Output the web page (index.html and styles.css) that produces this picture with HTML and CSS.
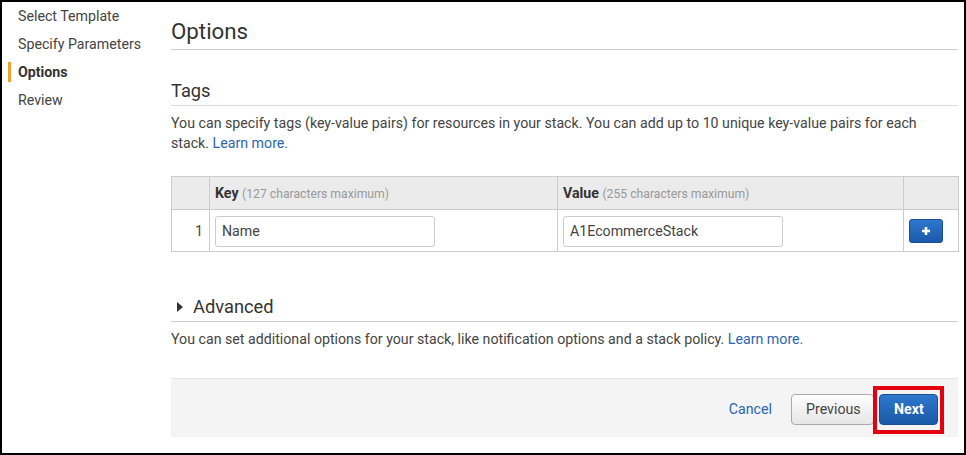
FILE: index.html
```html
<!DOCTYPE html>
<html>
<head>
<meta charset="utf-8">
<link rel="stylesheet" href="styles.css">
</head>
<body>
<div class="frame">
  <nav class="sidebar">
    <div class="step">Select Template</div>
    <div class="step">Specify Parameters</div>
    <div class="step active">Options</div>
    <div class="step">Review</div>
  </nav>
  <main class="main">
    <h1 class="title">Options</h1>
    <h2 class="section">Tags</h2>
    <p class="desc">You can specify tags (key-value pairs) for resources in your stack. You can add up to 10 unique key-value pairs for each stack. <a class="link" href="#">Learn more.</a></p>
    <table class="tags">
      <thead>
        <tr>
          <th class="num"></th>
          <th class="col-key"><b>Key</b> <span class="hint">(127 characters maximum)</span></th>
          <th class="col-val"><b>Value</b> <span class="hint">(255 characters maximum)</span></th>
          <th class="act"></th>
        </tr>
      </thead>
      <tbody>
        <tr>
          <td class="num">1</td>
          <td class="col-key"><input class="field" type="text" value="Name"></td>
          <td class="col-val"><input class="field" type="text" value="A1EcommerceStack"></td>
          <td class="act"><button class="plus" type="button"><svg width="10" height="10" viewBox="0 0 10 10"><path d="M5 1v8M1 5h8" stroke="#fff" stroke-width="2.6"/></svg></button></td>
        </tr>
      </tbody>
    </table>
    <h2 class="section adv"><span class="tri"></span>Advanced</h2>
    <p class="desc desc2">You can set additional options for your stack, like notification options and a stack policy. <a class="link" href="#">Learn more.</a></p>
    <div class="footer">
      <a class="cancel" href="#">Cancel</a>
      <button class="btn prev" type="button">Previous</button>
      <span class="next-wrap"><button class="btn next" type="button">Next</button></span>
    </div>
  </main>
</div>
</body>
</html>
```

FILE: styles.css
```css
html, body {
  margin: 0;
  padding: 0;
  background: #fff;
}
body {
  font-family: Roboto, "Liberation Sans", Arial, sans-serif;
  color: #444;
  font-size: 14.2px;
}
.frame {
  width: 966px;
  height: 455px;
  box-sizing: border-box;
  border: 2px solid #000;
  display: flex;
  overflow: hidden;
}
.sidebar {
  width: 169px;
  flex: none;
}
.step {
  margin: 4px 0 8px 6px;
  border-left: 3px solid transparent;
  padding-left: 7px;
  line-height: 20px;
  height: 20px;
  color: #444;
}
.step + .step {
  margin-top: 0;
}
.step.active {
  border-left-color: #f0a12e;
  font-weight: bold;
  color: #333;
}
.main {
  width: 787px;
  flex: none;
}
.title {
  margin: 14px 0 0;
  font-size: 22.3px;
  font-weight: normal;
  line-height: 30px;
  padding-bottom: 3px;
  border-bottom: 1px solid #ccc;
  color: #333;
}
.section {
  margin: 29px 0 0;
  font-size: 18.3px;
  font-weight: normal;
  line-height: 24px;
  padding-bottom: 2px;
  border-bottom: 1px solid #ddd;
  color: #333;
}
.section.adv {
  margin-top: 43px;
  display: flex;
  align-items: center;
  border-bottom-color: #ccc;
}
.tri {
  width: 0;
  height: 0;
  border-top: 5px solid transparent;
  border-bottom: 5px solid transparent;
  border-left: 6px solid #333;
  margin: 0 10px 0 6px;
}
.desc {
  margin: 7px 0 0;
  line-height: 20px;
}
.link {
  color: #2b66b1;
  text-decoration: none;
}
.tags {
  margin-top: 23px;
  width: 787px;
  border-collapse: collapse;
  table-layout: fixed;
}
.tags th, .tags td {
  border: 1px solid #ccc;
  padding: 0 5px;
  box-sizing: border-box;
}
.tags th {
  background: #ebebeb;
  height: 33px;
  text-align: left;
  font-weight: normal;
  color: #333;
}
.tags th b {
  font-weight: bold;
}
.hint {
  color: #999;
  font-size: 12.2px;
}
.tags td {
  height: 42px;
}
.num {
  width: 38px;
  text-align: right;
}
.tags td.num {
  padding-right: 6px;
}
.col-key {
  width: 348px;
}
.col-val {
  width: 346px;
}
.act {
  width: 55px;
}
.field {
  display: block;
  width: 220px;
  height: 31px;
  box-sizing: border-box;
  border: 1px solid #ccc;
  border-radius: 3px;
  padding: 0 6px;
  font: 14.2px Roboto, "Liberation Sans", Arial, sans-serif;
  color: #444;
  margin-top: 1px;
}
.plus {
  display: flex;
  align-items: center;
  justify-content: center;
  width: 34px;
  height: 24px;
  padding: 0;
  border: 1px solid #1a4f94;
  border-radius: 3px;
  background: linear-gradient(#2e77cc, #1a5aab);
}
.footer {
  margin-top: 29px;
  height: 59px;
  box-sizing: border-box;
  border-top: 1px solid #e6e6e6;
  background: #f4f4f4;
  display: flex;
  align-items: center;
  justify-content: flex-end;
  padding-right: 20px;
  padding-top: 2px;
}
.cancel {
  color: #2b66b1;
  text-decoration: none;
  margin-right: 19px;
}
.btn {
  height: 31px;
  box-sizing: border-box;
  border-radius: 4px;
  padding: 0 14px;
  font: 14.2px Roboto, "Liberation Sans", Arial, sans-serif;
}
.prev {
  width: 83px;
  border: 1px solid #aaa;
  background: linear-gradient(#fdfdfd, #e6e6e6);
  color: #444;
}
.next-wrap {
  position: relative;
  display: inline-block;
  margin-left: 5px;
  height: 31px;
}
.next-wrap::after {
  content: "";
  position: absolute;
  left: -6px;
  right: -6px;
  top: -8px;
  bottom: -9px;
  border: 4px solid #e3000f;
}
.next {
  width: 59px;
  border: 1px solid #1a4f94;
  background: linear-gradient(#2e77cc, #1a58a8);
  color: #fff;
  font-weight: bold;
}
```
